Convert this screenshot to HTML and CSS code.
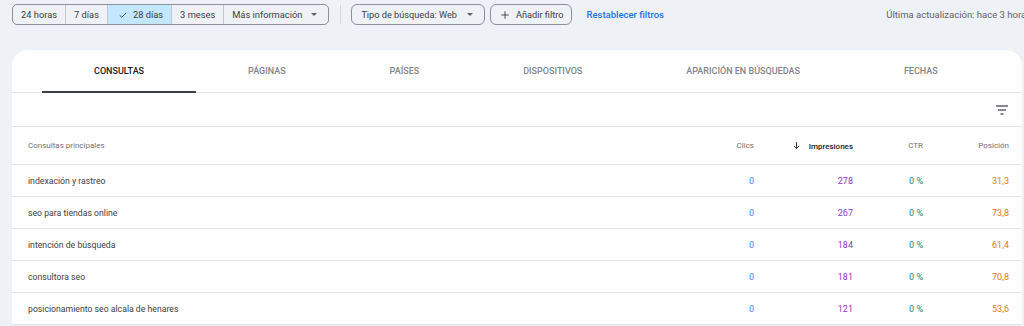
FILE: index.html
```html
<!DOCTYPE html>
<html lang="es">
<head>
  <meta charset="UTF-8">
  <meta name="viewport" content="width=device-width, initial-scale=1.0">
  <title>Rendimiento</title>
  <link rel="stylesheet" href="styles.css">
</head>
<body>
  <div class="toolbar">
    <div class="segmented">
      <button class="seg">24 horas</button>
      <button class="seg">7 días</button>
      <button class="seg active">
        <svg class="check" viewBox="0 0 24 24" width="10" height="10"><path d="M4 12.5l5 5L20 6.5" fill="none" stroke="#3c4043" stroke-width="2.2"/></svg>
        28 días
      </button>
      <button class="seg">3 meses</button>
      <button class="seg">Más información <span class="caret"></span></button>
    </div>
    <div class="divider"></div>
    <button class="chip">Tipo de búsqueda: Web <span class="caret"></span></button>
    <button class="chip">
      <svg class="plus" viewBox="0 0 24 24" width="10" height="10"><path d="M12 3v18M3 12h18" stroke="#3c4043" stroke-width="2.2"/></svg>
      Añadir filtro
    </button>
    <a class="reset" href="#">Restablecer filtros</a>
    <span class="updated">Última actualización: hace 3 horas</span>
  </div>

  <div class="card">
    <div class="tabs">
      <div class="tab active">Consultas</div>
      <div class="tab">Páginas</div>
      <div class="tab">Países</div>
      <div class="tab">Dispositivos</div>
      <div class="tab">Aparición en búsquedas</div>
      <div class="tab">Fechas</div>
    </div>
    <div class="filter-row">
      <svg viewBox="0 0 14 10" width="14" height="10"><path d="M1 1h12M3 5h8M5.5 9h3" stroke="#5f6368" stroke-width="1.3"/></svg>
    </div>
    <table class="data">
      <thead>
        <tr>
          <th class="query">Consultas principales</th>
          <th class="num col-clics">Clics</th>
          <th class="num col-impr sorted">
            <svg viewBox="0 0 24 24" width="9" height="9"><path d="M12 3v17M5 13l7 7 7-7" fill="none" stroke="#202124" stroke-width="2.4"/></svg>
            Impresiones
          </th>
          <th class="num col-ctr">CTR</th>
          <th class="num col-pos">Posición</th>
        </tr>
      </thead>
      <tbody>
        <tr><td class="query">indexación y rastreo</td><td class="num clics">0</td><td class="num impr">278</td><td class="num ctr">0 %</td><td class="num pos">31,3</td></tr>
        <tr><td class="query">seo para tiendas online</td><td class="num clics">0</td><td class="num impr">267</td><td class="num ctr">0 %</td><td class="num pos">73,8</td></tr>
        <tr><td class="query">intención de búsqueda</td><td class="num clics">0</td><td class="num impr">184</td><td class="num ctr">0 %</td><td class="num pos">61,4</td></tr>
        <tr><td class="query">consultora seo</td><td class="num clics">0</td><td class="num impr">181</td><td class="num ctr">0 %</td><td class="num pos">70,8</td></tr>
        <tr><td class="query">posicionamiento seo alcala de henares</td><td class="num clics">0</td><td class="num impr">121</td><td class="num ctr">0 %</td><td class="num pos">53,6</td></tr>
      </tbody>
    </table>
  </div>
</body>
</html>
```

FILE: styles.css
```css
/* General */
body {
  margin: 0;
  font-family: Roboto, "Liberation Sans", Arial, sans-serif;
  background-color: #eef2f7;
  color: #3c4043;
  overflow: hidden;
}

/* Toolbar */
.toolbar {
  display: flex;
  align-items: center;
  padding: 4px 0 0 12px;
  height: 21px;
  white-space: nowrap;
}

.segmented {
  display: flex;
  height: 21px;
  border: 1px solid #8d9096;
  border-radius: 5px;
  overflow: hidden;
  box-sizing: border-box;
}

.seg {
  display: flex;
  align-items: center;
  gap: 5px;
  padding: 0 8px;
  border: none;
  border-left: 1px solid #c4c7cc;
  background: transparent;
  font-family: inherit;
  font-size: 9.3px;
  color: #3c4043;
  cursor: pointer;
}

.seg:first-child {
  border-left: none;
}

.seg.active {
  background-color: #c2e7ff;
  padding: 0 8px 0 10px;
}

.caret {
  display: inline-block;
  width: 0;
  height: 0;
  margin-left: 4px;
  margin-right: 3px;
  border-left: 3px solid transparent;
  border-right: 3px solid transparent;
  border-top: 3px solid #5f6368;
}

.divider {
  width: 1px;
  height: 19px;
  background-color: #d4d7dc;
  margin: 0 10px 0 11px;
}

.chip {
  display: flex;
  align-items: center;
  gap: 6px;
  height: 21px;
  padding: 0 8px 0 9px;
  margin-right: 5px;
  border: 1px solid #8d9096;
  border-radius: 6px;
  background: transparent;
  font-family: inherit;
  font-size: 9.2px;
  color: #3c4043;
  cursor: pointer;
}

.reset {
  margin-left: 9px;
  font-size: 9.5px;
  font-weight: 500;
  color: #1a73e8;
  text-decoration: none;
}

.updated {
  margin-left: auto;
  margin-right: -7px;
  font-size: 9.5px;
  color: #5f6368;
}

/* Card */
.card {
  margin: 25px 2px 0 12px;
  background-color: #fff;
  border-radius: 16px 16px 0 0;
}

.tabs {
  display: flex;
  padding-left: 30px;
  height: 42px;
  border-bottom: 1px solid #e3e5e8;
}

.tab {
  position: relative;
  display: flex;
  align-items: center;
  padding: 0 52px;
  font-size: 9px;
  font-weight: 500;
  text-transform: uppercase;
  color: #80868b;
}

.tab.active {
  color: #202124;
}

.tab.active::after {
  content: "";
  position: absolute;
  left: 0;
  right: 0;
  bottom: -1px;
  height: 2px;
  background-color: #3c4043;
}

.filter-row {
  display: flex;
  align-items: center;
  justify-content: flex-end;
  height: 33px;
  padding-right: 13px;
  border-bottom: 1px solid #e3e5e8;
}

/* Table */
.data {
  width: 100%;
  border-collapse: collapse;
}

.data th {
  height: 37px;
  padding: 0;
  font-size: 8px;
  font-weight: 400;
  color: #6f7378;
  border-bottom: 1px solid #e3e5e8;
}

.data td {
  height: 31px;
  padding: 0;
  font-size: 9px;
  border-bottom: 1px solid #e3e5e8;
}

.data .query {
  text-align: left;
  padding-left: 16px;
  font-size: 8.7px;
}

.data th.query {
  font-size: 8px;
}

.data .num {
  text-align: right;
}

.col-clics { width: 90px; }
.col-impr { width: 99px; }
.col-ctr { width: 70px; }
.col-pos { width: 86px; }

.data .pos,
.data .col-pos {
  padding-right: 13px;
}

.data th.sorted {
  color: #202124;
  font-weight: 500;
}

.data th.sorted svg {
  margin-right: 6px;
  vertical-align: -1px;
}

.clics { color: #4285f4; }
.impr { color: #9334c6; }
.ctr { color: #0f8a7c; }
.pos { color: #e8790f; }
```
